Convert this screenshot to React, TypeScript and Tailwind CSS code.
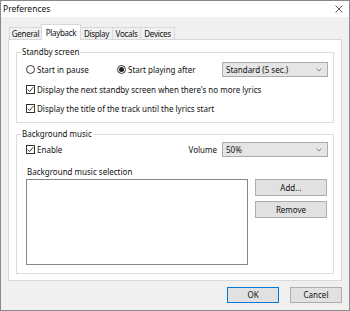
import React from "react";

const Radio = ({ on }: { on?: boolean }) => (
  <span className="w-[9px] h-[9px] rounded-full border border-[#333] bg-white flex items-center justify-center shrink-0">
    {on && <span className="w-[5px] h-[5px] rounded-full bg-[#222]" />}
  </span>
);

const Check = () => (
  <span className="w-[9px] h-[9px] border border-[#333] bg-white flex items-center justify-center shrink-0">
    <svg width="7" height="7" viewBox="0 0 7 7">
      <path d="M0.8 3.6 L2.7 5.5 L6.2 1.2" fill="none" stroke="#222" strokeWidth="0.9" />
    </svg>
  </span>
);

const Select = ({ label }: { label: string }) => (
  <div className="w-[106px] h-[15px] border border-[#adadad] bg-[#e5e5e5] flex items-center justify-between pl-[3px] pr-[5px]">
    <span>{label}</span>
    <svg width="6" height="4" viewBox="0 0 6 4">
      <path d="M0.5 0.5 L3 3 L5.5 0.5" fill="none" stroke="#666" strokeWidth="0.8" />
    </svg>
  </div>
);

const Group = ({ title, className, children }: { title: string; className: string; children: React.ReactNode }) => (
  <div className={"relative border border-[#dcdcdc] " + className}>
    <span className="absolute -top-[7px] left-[4px] bg-white px-[1px] leading-[12px]">{title}</span>
    {children}
  </div>
);

const Btn = ({ label, cls }: { label: string; cls: string }) => (
  <div className={"flex items-center justify-center bg-[#e1e1e1] border " + cls}>{label}</div>
);

export default function App() {
  const tabs = [
    { n: "General", w: "w-[33px]" },
    { n: "Playback", w: "w-[40px]" },
    { n: "Display", w: "w-[33px]" },
    { n: "Vocals", w: "w-[29px]" },
    { n: "Devices", w: "w-[35px]" },
  ];
  return (
    <div
      className="w-[350px] h-[311px] border border-[#8a8a8a] bg-[#f0f0f0] flex flex-col text-[8px] text-[#111] leading-none"
      style={{ fontFamily: '"Noto Sans", sans-serif' }}
    >
      <div className="h-[16px] bg-white flex items-center justify-between pl-[2px] pr-[6px] shrink-0">
        <span className="text-[8.5px]">Preferences</span>
        <svg width="8" height="8" viewBox="0 0 8 8">
          <path d="M0.5 0.5 L7.5 7.5 M7.5 0.5 L0.5 7.5" stroke="#333" strokeWidth="0.8" />
        </svg>
      </div>
      <div className="flex-1 flex flex-col px-[7px] pt-[7px]">
        <div className="flex items-end h-[15px] pl-[1px] tracking-[-0.3px]">
          {tabs.map((t) =>
            t.n === "Playback" ? (
              <div
                key={t.n}
                className={"h-[16px] -mb-[1px] -ml-[1px] relative z-10 bg-white border border-b-0 border-[#d9d9d9] flex items-center justify-center " + t.w}
              >
                {t.n}
              </div>
            ) : (
              <div
                key={t.n}
                className={"h-[12px] bg-[#f0f0f0] border border-b-0 border-[#d9d9d9] -ml-[1px] first:ml-0 flex items-center justify-center " + t.w}
              >
                {t.n}
              </div>
            )
          )}
        </div>
        <div className="h-[242px] w-[334px] bg-white border border-[#d9d9d9] flex flex-col px-[7px] pt-[12px]">
          <Group title="Standby screen" className="h-[71px] flex flex-col pl-[9px] pr-[5px]">
            <div className="flex items-center h-[15px] mt-[9px]">
              <div className="flex items-center gap-[2px] w-[91px]">
                <Radio />
                <span>Start in pause</span>
              </div>
              <div className="flex items-center gap-[2px] w-[105px]">
                <Radio on />
                <span>Start playing after</span>
              </div>
              <Select label="Standard (5 sec.)" />
            </div>
            <div className="flex items-center gap-[2px] mt-[8px]">
              <Check />
              <span>Display the next standby screen when there's no more lyrics</span>
            </div>
            <div className="flex items-center gap-[2px] mt-[10px]">
              <Check />
              <span>Display the title of the track until the lyrics start</span>
            </div>
          </Group>
          <Group title="Background music" className="h-[140px] mt-[11px] flex flex-col pl-[9px] pr-[5px]">
            <div className="flex items-center justify-between h-[15px] mt-[7px]">
              <div className="flex items-center gap-[2px]">
                <Check />
                <span>Enable</span>
              </div>
              <div className="flex items-center gap-[5px]">
                <span>Volume</span>
                <Select label="50%" />
              </div>
            </div>
            <div className="mt-[11px] pl-[1px]">Background music selection</div>
            <div className="flex mt-[3px] gap-[7px]">
              <div className="w-[222px] h-[86px] bg-white border border-[#828790]" />
              <div className="flex flex-col gap-[5px]">
                <Btn label="Add..." cls="w-[72px] h-[17px] border-[#adadad]" />
                <Btn label="Remove" cls="w-[72px] h-[17px] border-[#adadad]" />
              </div>
            </div>
          </Group>
        </div>
        <div className="flex justify-end gap-[11px] mt-[6px]">
          <Btn label="OK" cls="w-[52px] h-[16px] border-[#0078d7]" />
          <Btn label="Cancel" cls="w-[52px] h-[16px] border-[#adadad]" />
        </div>
      </div>
    </div>
  );
}
